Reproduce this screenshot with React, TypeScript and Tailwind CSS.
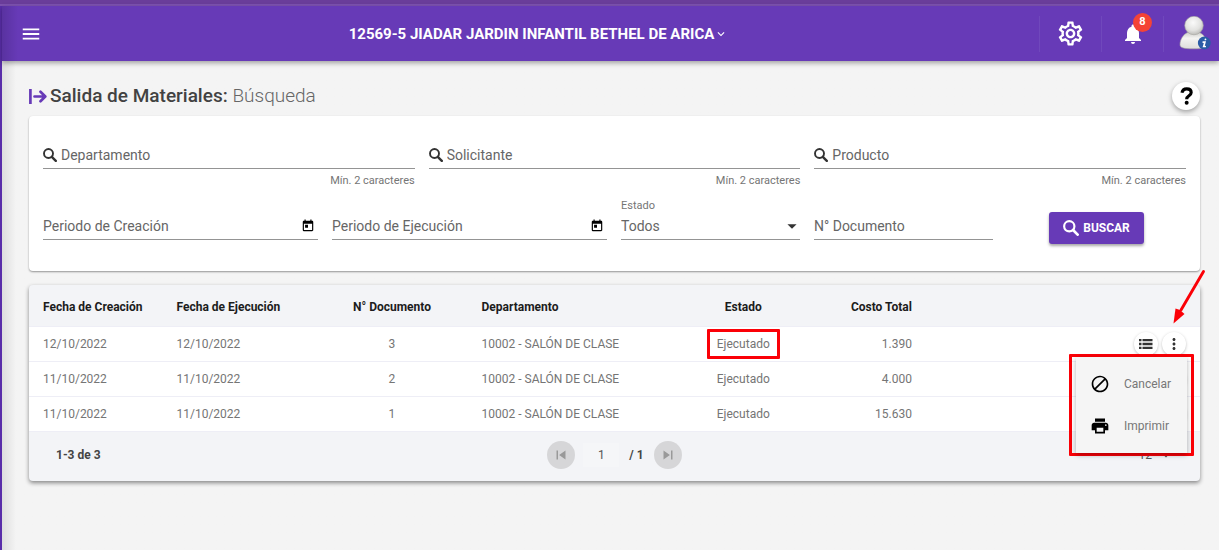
import React, { useId } from "react";
import {
  MdMenu,
  MdKeyboardArrowDown,
  MdNotifications,
  MdArrowDropDown,
  MdMoreVert,
  MdBlock,
  MdPrint,
  MdSkipPrevious,
  MdSkipNext,
  MdToday,
  MdOutlineSettings,
} from "react-icons/md";

const rows = [
  { created: "12/10/2022", executed: "12/10/2022", doc: "3", dept: "10002 - SALÓN DE CLASE", status: "Ejecutado", cost: "1.390" },
  { created: "11/10/2022", executed: "11/10/2022", doc: "2", dept: "10002 - SALÓN DE CLASE", status: "Ejecutado", cost: "4.000" },
  { created: "11/10/2022", executed: "11/10/2022", doc: "1", dept: "10002 - SALÓN DE CLASE", status: "Ejecutado", cost: "15.630" },
];

function MagnifierIcon({ className }: { className?: string }) {
  return (
    <svg viewBox="0 0 14 14" className={className} fill="none" stroke="currentColor" aria-hidden="true">
      <circle cx="5.5" cy="5.5" r="4.5" strokeWidth="1.9" />
      <path d="M8.8 8.8 12.8 12.8" strokeWidth="2.4" strokeLinecap="round" />
    </svg>
  );
}

function ExitArrowIcon() {
  return (
    <svg viewBox="0 0 18 15" className="h-[15px] w-[18px]" fill="none" stroke="currentColor" strokeWidth="2.7" aria-hidden="true">
      <path d="M1.4 0v15" />
      <path d="M5.5 7.5h10.5M11.5 2.8l4.800 4.700-4.800 4.700" strokeLinecap="round" strokeLinejoin="round" />
    </svg>
  );
}

function ListIcon() {
  return (
    <svg viewBox="0 0 14 10" className="h-2.5 w-3.5" fill="currentColor" aria-hidden="true">
      <path d="M0 0h2.500v2.300H0zM0 3.850h2.500v2.300H0zM0 7.700h2.500V10H0zM3.500 0H13.500v2.300H3.500zM3.500 3.850H13.500v2.300H3.500zM3.500 7.700H13.500V10H3.500z" />
    </svg>
  );
}

function Avatar() {
  return (
    <svg viewBox="0 0 32 36" className="h-9 w-8" aria-hidden="true">
      <defs>
        <radialGradient id="skin" cx="0.45" cy="0.35" r="0.7">
          <stop offset="0" stopColor="#fafafa" />
          <stop offset="0.6" stopColor="#e2e2e0" />
          <stop offset="1" stopColor="#b4b4b0" />
        </radialGradient>
        <linearGradient id="body" x1="0" y1="0" x2="0" y2="1">
          <stop offset="0" stopColor="#cfcfcc" />
          <stop offset="0.35" stopColor="#f4f4f2" />
          <stop offset="1" stopColor="#dededb" />
        </linearGradient>
      </defs>
      <path d="M8.500 16.500C4 18.500 1 24 1 28.500c0 3.200 3 4.300 13.500 4.300S28 31.700 28 28.500c0-5-3-10-7.500-12z" fill="url(#body)" stroke="#a5a5a0" strokeWidth="0.6" />
      <circle cx="15" cy="9.500" r="9.300" fill="url(#skin)" stroke="#a5a5a0" strokeWidth="0.6" />
      <circle cx="25.300" cy="27" r="6.400" fill="#2a5ca6" />
      <path d="M26.400 23.400h.1M24.200 26.100h1.700l-1.200 4.400h1.500" fill="none" stroke="#fff" strokeWidth="1.700" strokeLinecap="round" />
    </svg>
  );
}

function SearchField({ label }: { label: string }) {
  const id = useId();
  return (
    <div>
      <div className="flex h-7 items-center gap-1 border-b border-[#949494]">
        <label htmlFor={id} className="text-[#333]" aria-label={label}>
          <MagnifierIcon className="size-3.5" />
        </label>
        <input id={id} placeholder={label} className="min-w-0 flex-1 bg-transparent text-sm text-[#666] outline-none placeholder:text-[#666]" />
      </div>
      <p className="mt-1 text-right text-[11px] leading-4 text-[#757575]">Mín. 2 caracteres</p>
    </div>
  );
}

function TextField({ label, calendar }: { label: string; calendar?: boolean }) {
  return (
    <div className="flex h-7 items-center border-b border-[#949494]">
      <input aria-label={label} placeholder={label} className="min-w-0 flex-1 bg-transparent text-sm text-[#666] outline-none placeholder:text-[#666]" />
      {calendar && (
        <button type="button" aria-label={"Abrir calendario: " + label} className="mr-[3px] text-black">
          <MdToday className="size-3.5" />
        </button>
      )}
    </div>
  );
}

export default function App() {
  return (
    <div className="flex min-h-screen flex-col bg-[#f4f4f4] font-['Roboto',sans-serif] text-[#333]">
      <div className="h-[6px] border-b-2 border-[#7d52b0] bg-[#6a3d9a]" />
      <div className="flex flex-1 border-l-2 border-[#5a2eaa]">
        <div className="flex min-w-0 flex-1 flex-col bg-linear-to-r from-[#dedede] to-[#f4f4f4] to-[14px]">
          <header className="flex h-[55px] items-center bg-linear-to-r from-[#5932a0] to-[#673ab7] to-[16px] text-white shadow-[0_2px_5px_rgba(0,0,0,0.35)]">
            <button aria-label="Menú" className="ml-[18px]">
              <MdMenu className="size-[22px]" />
            </button>
            <div className="flex flex-1 justify-center pr-1">
              <button className="flex items-center text-[15px] leading-5 font-bold">
                12569-5 JIADAR JARDIN INFANTIL BETHEL DE ARICA
                <MdKeyboardArrowDown className="size-3.5" />
              </button>
            </div>
            <div className="flex h-9 items-center justify-end">
              <button aria-label="Configuración" className="flex h-full w-[62px] items-center justify-center border-l border-[#7048bc]">
                <MdOutlineSettings className="size-[29px]" />
              </button>
              <button aria-label="Notificaciones" className="relative flex h-full w-[62px] items-center justify-center border-l border-[#7048bc]">
                <MdNotifications className="size-6" />
                <span className="absolute top-[-3px] right-[11px] flex size-[19px] items-center justify-center rounded-full bg-[#f44336] text-[11px] font-bold">8</span>
              </button>
              <button aria-label="Usuario" className="flex h-full w-14 items-center justify-center border-l border-[#7048bc] pl-1.5">
                <Avatar />
              </button>
            </div>
          </header>

          <main className="pr-[19px] pl-[27px]">
            <div className="flex h-[55px] items-end justify-between">
              <h1 className="mb-2 flex items-center gap-[3px] text-[19px] leading-6 font-medium text-[#424242]">
                <span className="text-[#673ab7]"><ExitArrowIcon /></span>
                <span>Salida de Materiales: <span className="font-light text-[#666]">Búsqueda</span></span>
              </h1>
              <button aria-label="Ayuda" className="mb-[6px] flex size-7 items-center justify-center rounded-full bg-white text-black shadow-[0_2px_5px_rgba(0,0,0,0.35)]">
                <svg viewBox="0 0 14 20" className="h-[18px] w-[13px]" fill="none" stroke="currentColor" strokeWidth="3.5" aria-hidden="true">
                  <path d="M2 6.500C2.500 3.500 4.500 2 7.200 2c3 0 5 1.600 5 4.200 0 3.800-5 3.300-5 7.300" />
                  <circle cx="7.200" cy="17.500" r="2.200" fill="currentColor" stroke="none" />
                </svg>
              </button>
            </div>

            <form className="rounded bg-white px-3.5 pt-[25px] pb-[27px] shadow-[0_1px_2px_rgba(0,0,0,0.4)]">
              <div className="grid grid-cols-3 gap-3.5">
                <SearchField label="Departamento" />
                <SearchField label="Solicitante" />
                <SearchField label="Producto" />
              </div>
              <div className="mt-[23px] grid grid-cols-[275fr_275fr_179fr_179fr_179fr] gap-3.5">
                <TextField label="Periodo de Creación" calendar />
                <TextField label="Periodo de Ejecución" calendar />
                <div className="relative flex h-7 items-center border-b border-[#949494]">
                  <label htmlFor="estado" className="absolute -top-3 text-[11px] leading-3 text-[#757575]">Estado</label>
                  <select id="estado" className="w-full appearance-none bg-transparent text-sm text-[#666]">
                    <option>Todos</option>
                  </select>
                  <MdArrowDropDown className="pointer-events-none absolute right-[-3px] size-[22px]" />
                </div>
                <TextField label="N° Documento" />
                <div className="flex items-center justify-center">
                  <button type="button" className="flex h-8 w-[95px] items-center justify-center gap-1 rounded-[3px] bg-[#673ab7] text-xs font-bold text-white shadow-[0_2px_3px_rgba(0,0,0,0.35)]">
                    <MagnifierIcon className="size-4" />
                    BUSCAR
                  </button>
                </div>
              </div>
            </form>

            <section className="relative mt-3.5 rounded bg-[#f3f4f7] shadow-[0_2px_4px_rgba(0,0,0,0.45)]">
              <table className="w-full table-fixed text-xs text-[#757575]">
                <colgroup>
                  <col className="w-[11.4%]" />
                  <col className="w-[14.6%]" />
                  <col className="w-[10%]" />
                  <col className="w-[19%]" />
                  <col className="w-[12%]" />
                  <col className="w-[8.4%]" />
                  <col />
                </colgroup>
                <thead>
                  <tr className="h-[41px] text-left text-[#1c1c1c] *:pt-1 *:font-bold">
                    <th className="pl-3.5">Fecha de Creación</th>
                    <th className="pl-3.5">Fecha de Ejecución</th>
                    <th className="text-center">N° Documento</th>
                    <th className="pl-[31px]">Departamento</th>
                    <th className="text-center">Estado</th>
                    <th className="text-right">Costo Total</th>
                    <th aria-label="Acciones" />
                  </tr>
                </thead>
                <tbody className="bg-white">
                  {rows.map((r, i) => (
                    <tr key={i} className="h-[35px] border-t border-[#eeeef6]">
                      <td className="pl-3.5">{r.created}</td>
                      <td className="pl-3.5">{r.executed}</td>
                      <td className="text-center">{r.doc}</td>
                      <td className="pl-[31px]">{r.dept}</td>
                      <td className="text-center">
                        <span className="relative">
                          {r.status}
                          {i === 0 && <span className="absolute -inset-x-2.5 -inset-y-2 rounded-[1px] border-[3px] border-[#fb0007]" />}
                        </span>
                      </td>
                      <td className="text-right">{r.cost}</td>
                      <td>
                        <div className="flex justify-end gap-1 pr-3.5">
                          <button aria-label="Ver detalle" className="flex size-6 items-center justify-center rounded-full bg-white text-[#333] shadow-[0_1px_3px_rgba(0,0,0,0.25)]">
                            <ListIcon />
                          </button>
                          <button aria-label="Más opciones" className="flex size-6 items-center justify-center rounded-full bg-white text-[#333] shadow-[0_1px_3px_rgba(0,0,0,0.25)]">
                            <MdMoreVert className="size-[18px]" />
                          </button>
                        </div>
                      </td>
                    </tr>
                  ))}
                </tbody>
              </table>
              <footer className="grid h-[50px] grid-cols-[1fr_auto_1fr] items-center border-t border-[#eeeef6] pb-1 text-xs font-medium text-[#444]">
                <p className="pl-[27px] font-bold">1-3 de 3</p>
                <div className="flex items-center">
                  <button aria-label="Primera página" className="flex size-7 items-center justify-center rounded-full bg-[#d6d6d8] text-[#999]">
                    <MdSkipPrevious className="size-[18px]" />
                  </button>
                  <input aria-label="Página" defaultValue="1" className="mr-2.5 ml-2 h-6 w-9 bg-[#f5f6f8] text-center text-xs font-normal text-[#555]" />
                  <span className="mr-2.5 font-bold">/ 1</span>
                  <button aria-label="Última página" className="flex size-7 items-center justify-center rounded-full bg-[#d6d6d8] text-[#999]">
                    <MdSkipNext className="size-[18px]" />
                  </button>
                </div>
                <button className="mr-6 flex items-center justify-self-end font-normal text-[#555]">
                  <span className="mr-1 text-xs">12</span>
                  <MdArrowDropDown className="size-5" />
                </button>
              </footer>

              <div className="absolute top-[69px] right-[6px] rounded-[1px] border-[3px] border-[#fb0007] px-1">
                <div role="menu" className="flex h-24 w-[111px] flex-col bg-[#f5f5f5] pt-1.5 text-xs text-[#777] shadow-[0_2px_5px_rgba(0,0,0,0.3)]">
                  <button role="menuitem" className="flex h-[42px] items-center gap-3.5 pl-3.5">
                    <MdBlock className="size-5 text-black" />
                    Cancelar
                  </button>
                  <button role="menuitem" className="flex h-[42px] items-center gap-3.5 pl-3.5">
                    <MdPrint className="size-5 text-black" />
                    Imprimir
                  </button>
                </div>
              </div>
              <svg viewBox="0 0 34 56" className="pointer-events-none absolute -top-4 right-[-6px] h-14 w-[34px]" aria-hidden="true">
                <path d="M31.500 2.500 9 41" stroke="#fb0007" strokeWidth="2.9" strokeLinecap="round" />
                <path d="M1.500 54.500 3.500 39.500l4.500 1.500 4.500 4z" fill="#fb0007" />
              </svg>
            </section>
          </main>
        </div>
      </div>
    </div>
  );
}
